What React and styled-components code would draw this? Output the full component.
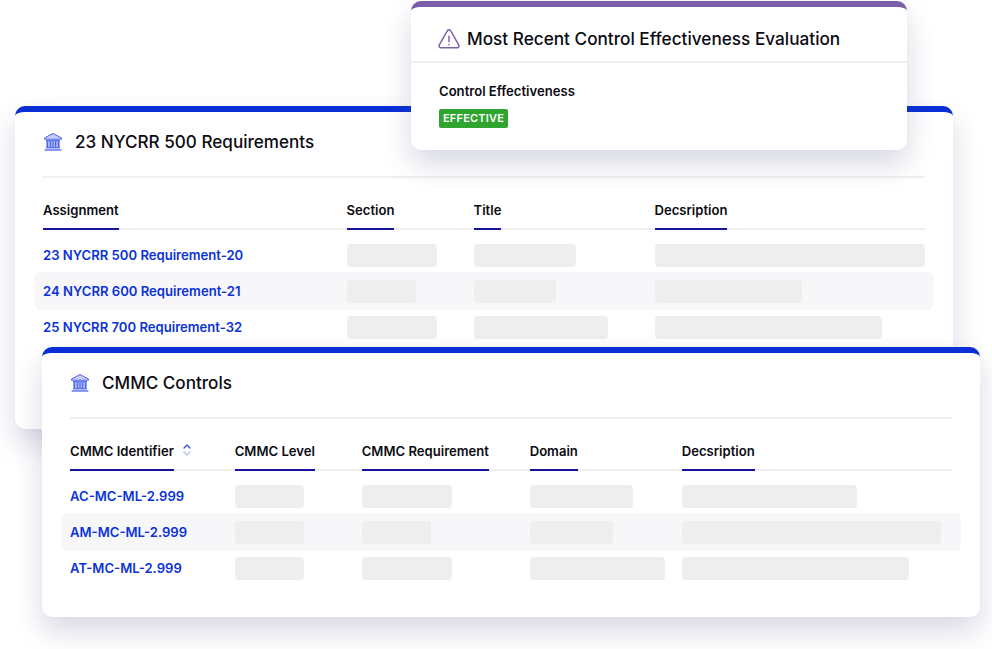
import React from 'react'
import styled, { createGlobalStyle } from 'styled-components'

const GlobalStyle = createGlobalStyle`
  html, body { margin: 0; padding: 0; background: #fff; }
  body { font-family: Inter, "Liberation Sans", sans-serif; color: #0b0b12; overflow: hidden; }
`

const Stage = styled.div`
  position: relative;
  width: 992px;
  height: 649px;
  overflow: hidden;
`

const Card = styled.section`
  position: absolute;
  left: ${p => p.$left}px;
  top: ${p => p.$top}px;
  z-index: ${p => p.$z};
  width: ${p => p.$width}px;
  height: ${p => p.$height}px;
  box-sizing: border-box;
  padding: 0 28px;
  background: #fff;
  border-radius: 10px;
  border-top: 6px solid ${p => p.$accent};
  box-shadow: 0 14px 28px rgba(60, 60, 120, 0.2);
`

const CardHeader = styled.header`
  display: flex;
  align-items: center;
  gap: 12px;
  height: 66px;
  padding-bottom: 4px;
  box-sizing: border-box;
  border-bottom: 2px solid #efeff1;
`

const CardTitle = styled.h2`
  margin: 0;
  font-size: 17.1px;
  font-weight: 500;
  line-height: 24px;
`

const HeadRow = styled.div`
  display: grid;
  grid-template-columns: ${p => p.$cols};
  height: 52px;
  box-sizing: border-box;
  border-bottom: 2px solid #efeff1;
`

const HeadCell = styled.div`
  display: flex;
  align-items: flex-end;
  position: relative;
  height: 52px;
`

const HeadLabel = styled.span`
  display: block;
  box-sizing: border-box;
  height: 38px;
  padding: 9px 0 0;
  font-size: 13.1px;
  font-weight: 600;
  line-height: 18px;
  white-space: nowrap;
  border-bottom: 2px solid #14149c;
`

const SortIcon = styled.svg`
  position: absolute;
  left: 112px;
  top: 24px;
`

const Body = styled.div`
  padding-top: 6px;
`

const Row = styled.div`
  display: grid;
  grid-template-columns: ${p => p.$cols};
  align-items: center;
  height: 38px;
  margin: 0 -9px -2px;
  padding: 0 9px;
  border-radius: 6px;
  background: ${p => (p.$shaded ? '#f7f7f9' : 'transparent')};
`

const RowLink = styled.a`
  font-size: 13.1px;
  font-weight: 600;
  color: #0a32d6;
  text-decoration: none;
  white-space: nowrap;
`

const Skeleton = styled.div`
  height: 23px;
  border-radius: 4px;
  background: #eeeeee;
`

const AlertTitle = styled(CardTitle)`
  font-size: 17.2px;
`

const AlertHeader = styled(CardHeader)`
  height: 56px;
  margin: 0 -28px;
  padding: 9px 28px 0 27px;
  gap: 7px;
`

const AlertBody = styled.div`
  padding-top: 19px;
`

const FieldLabel = styled.div`
  font-size: 13.1px;
  font-weight: 600;
  line-height: 18px;
`

const Badge = styled.span`
  display: inline-block;
  margin-top: 9px;
  padding: 0 4px;
  height: 19px;
  line-height: 19px;
  font-size: 11px;
  font-weight: 600;
  letter-spacing: 0.2px;
  color: #fff;
  background: #2fa52f;
  border-radius: 2px;
`

function BankIcon() {
  return (
    <svg width="20" height="20" viewBox="0 0 20 20" fill="none">
      <path d="M10 1.5 18.5 6v1.2h-17V6z" fill="#c6cffc" stroke="#4a60e8" strokeWidth="1" strokeLinejoin="round" />
      <path d="M3 8.2h14v7.6H3z" fill="#a9b6f8" />
      <path d="M3 8.2h14v1.1H3z" fill="#4a60e8" />
      <path d="M4.4 9.5v5.6M7.4 9.5v5.6M10 9.5v5.6M12.6 9.5v5.6M15.6 9.5v5.6" stroke="#4a60e8" strokeWidth="1.1" />
      <path d="M3 15.2h14v1.2H3z" fill="#4a60e8" />
      <path d="M1.6 17h16.8v1.9H1.6z" fill="#8294f3" />
    </svg>
  )
}

function WarnIcon() {
  return (
    <svg width="22" height="22" viewBox="0 0 20 20" fill="none" stroke="#7b5ea7" strokeWidth="1.3" strokeLinecap="round" strokeLinejoin="round">
      <path d="M8.4 2.6 1.2 15.4A1.7 1.7 0 0 0 2.7 18h14.6a1.7 1.7 0 0 0 1.5-2.6L11.6 2.6a1.8 1.8 0 0 0-3.2 0z" />
      <path d="M10 7.5v5M10 15v.2" />
    </svg>
  )
}

const nycrrCols = '303.5px 127px 181px 1fr'
const nycrrRows = [
  { name: '23 NYCRR 500 Requirement-20', bars: [90, 102, 270] },
  { name: '24 NYCRR 600 Requirement-21', bars: [69, 82, 147] },
  { name: '25 NYCRR 700 Requirement-32', bars: [90, 134, 227] },
]

const cmmcCols = '164.7px 127px 168px 152px 1fr'
const cmmcRows = [
  { name: 'AC-MC-ML-2.999', bars: [69, 90, 103, 175] },
  { name: 'AM-MC-ML-2.999', bars: [69, 69, 83, 259] },
  { name: 'AT-MC-ML-2.999', bars: [69, 90, 135, 227] },
]

function DataTable({ cols, headers, rows, sortable }) {
  return (
    <>
      <HeadRow $cols={cols}>
        {headers.map((h, i) => (
          <HeadCell key={h}>
            <HeadLabel>{h}</HeadLabel>
            {sortable && i === 0 && (
              <SortIcon width="10" height="14" viewBox="0 0 10 14" fill="none" strokeWidth="1.3" strokeLinecap="round" strokeLinejoin="round">
                <path d="M2 5 5 2l3 3" stroke="#3a4fe0" />
                <path d="M2 9l3 3 3-3" stroke="#b4bdf2" />
              </SortIcon>
            )}
          </HeadCell>
        ))}
      </HeadRow>
      <Body>
        {rows.map((r, i) => (
          <Row key={r.name} $cols={cols} $shaded={i === 1}>
            <RowLink href="#">{r.name}</RowLink>
            {r.bars.map((w, j) => (
              <Skeleton key={j} style={{ width: w }} />
            ))}
          </Row>
        ))}
      </Body>
    </>
  )
}

export default function App() {
  return (
    <Stage>
      <GlobalStyle />
      <Card $left={15} $top={106} $width={938} $height={323} $z={1} $accent="#0a2fd6">
        <CardHeader>
          <BankIcon />
          <CardTitle>23 NYCRR 500 Requirements</CardTitle>
        </CardHeader>
        <DataTable
          cols={nycrrCols}
          headers={['Assignment', 'Section', 'Title', 'Decsription']}
          rows={nycrrRows}
        />
      </Card>

      <Card $left={411} $top={1} $width={496} $height={149} $z={3} $accent="#7b5ea7">
        <AlertHeader>
          <WarnIcon />
          <AlertTitle>Most Recent Control Effectiveness Evaluation</AlertTitle>
        </AlertHeader>
        <AlertBody>
          <FieldLabel>Control Effectiveness</FieldLabel>
          <Badge>EFFECTIVE</Badge>
        </AlertBody>
      </Card>

      <Card $left={42} $top={347} $width={938} $height={270} $z={2} $accent="#0a2fd6">
        <CardHeader>
          <BankIcon />
          <CardTitle>CMMC Controls</CardTitle>
        </CardHeader>
        <DataTable
          cols={cmmcCols}
          headers={['CMMC Identifier', 'CMMC Level', 'CMMC Requirement', 'Domain', 'Decsription']}
          rows={cmmcRows}
          sortable
        />
      </Card>
    </Stage>
  )
}
